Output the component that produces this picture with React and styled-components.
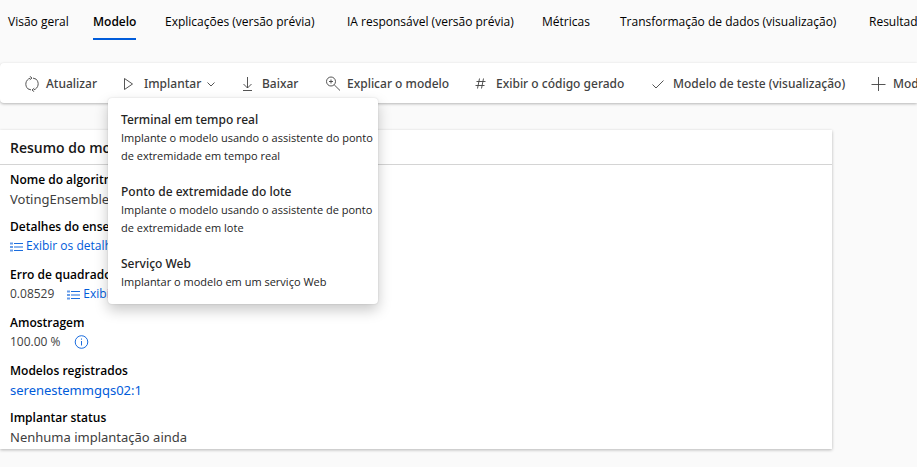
import React from "react";
import styled, { createGlobalStyle } from "styled-components";

const GlobalStyle = createGlobalStyle`
  * { box-sizing: border-box; }
  body {
    margin: 0;
    background: #fafafa;
    color: #000;
    font-family: "Noto Sans", "Open Sans", sans-serif;
    font-size: 12px;
    line-height: 20px;
    overflow: hidden;
  }
  button { font: inherit; color: inherit; border: 0; padding: 0; background: none; cursor: pointer; }
  a { color: #015cda; text-decoration: none; }
`;

const Page = styled.main`
  min-height: 100vh;
  overflow: hidden;
`;

const TabList = styled.div`
  display: flex;
  padding: 4px 0 0 8px;
  margin-bottom: 23px;
`;

const TabSlot = styled.div`
  flex: 0 0 ${(p) => p.$width}px;
`;

const Tab = styled.button`
  height: 36px;
  padding-top: 2px;
  white-space: nowrap;
  font-family: "Open Sans", sans-serif;
  font-weight: ${(p) => (p.$active ? 600 : 400)};
  border-bottom: 2px solid ${(p) => (p.$active ? "#015cda" : "transparent")};
`;

const Toolbar = styled.div`
  display: flex;
  height: 40px;
  padding-left: 24px;
  background: #fff;
  border-radius: 4px 0 0 4px;
  box-shadow: 0 1px 3px rgba(0, 0, 0, 0.28);
`;

const CommandSlot = styled.div`
  position: relative;
  display: flex;
  flex: 0 0 ${(p) => p.$width}px;
`;

const Command = styled.button`
  display: flex;
  align-items: center;
  gap: 6px;
  padding-top: 1px;
  white-space: nowrap;
  font-weight: 500;
  color: #424242;
`;

const Icon = styled.svg`
  flex: none;
  width: 16px;
  height: 16px;
  fill: none;
  stroke: currentColor;
  stroke-width: 0.9;
`;

const Chevron = styled(Icon)`
  width: 8px;
  height: 8px;
`;

const Menu = styled.div`
  position: absolute;
  z-index: 2;
  top: 35px;
  left: -14px;
  width: 270px;
  padding: 13px 4px 13px 13px;
  display: flex;
  flex-direction: column;
  gap: 18px;
  background: #fff;
  border-radius: 4px;
  box-shadow: 0 0 2px rgba(0, 0, 0, 0.14), 0 6px 14px rgba(0, 0, 0, 0.22);
`;

const MenuItem = styled.button`
  text-align: left;
  color: #242424;
  line-height: 18px;
`;

const MenuTitle = styled.span`
  display: block;
  font-weight: 500;
`;

const MenuText = styled.span`
  display: block;
  font-family: "Open Sans", sans-serif;
  font-size: 11px;
`;

const Card = styled.section`
  width: calc(100% - 85px);
  margin-top: 27px;
  padding-bottom: 3px;
  background: #fff;
  box-shadow: 0 1px 3px rgba(0, 0, 0, 0.28);
`;

const CardTitle = styled.h2`
  margin: 0;
  padding: 8px 10px 7px;
  font-family: "Open Sans", sans-serif;
  font-size: 14px;
  line-height: 19px;
  font-weight: 600;
  color: #171717;
  border-bottom: 1px solid #d4d4d4;
`;

const Details = styled.dl`
  margin: 0;
  padding: 6px 10px 0;
  display: flex;
  flex-direction: column;
  gap: 10px;
`;

const Label = styled.dt`
  font-family: "Open Sans", sans-serif;
  font-weight: 600;
  line-height: 18px;
  white-space: nowrap;
`;

const Value = styled.dd`
  display: flex;
  align-items: center;
  gap: 13px;
  margin: 0;
  height: ${(p) => (p.$large ? 19 : 20)}px;
  font-family: ${(p) => (p.$large ? '"Noto Sans"' : '"Open Sans"')}, sans-serif;
  font-size: ${(p) => (p.$large ? 13 : 12)}px;
  line-height: 18px;
  color: #404040;
  white-space: nowrap;
`;

const IconLink = styled.a`
  display: flex;
  align-items: center;
  gap: 3px;
`;

const InfoButton = styled.button`
  display: flex;
  color: #015cda;
`;

const ListGlyph = styled(Icon)`
  width: 13px;
  height: 13px;
`;

const ListIcon = () => (
  <ListGlyph viewBox="0 0 13 13">
    <path d="M4 3.500h9M4 7h9M4 10.500h9" />
    <path d="M0 3.500h3M0 7h3M0 10.500h3" strokeWidth="2" strokeOpacity="0.6" />
  </ListGlyph>
);

const InfoIcon = () => (
  <Icon viewBox="0 0 16 16">
    <circle cx="7.500" cy="8" r="6.3" />
    <path d="M7.500 7v4.500M7.500 4.500v1.200" />
  </Icon>
);

const icons = {
  refresh: (
    <>
      <path d="M6 2.200A6.300 6.300 0 0 0 4 12.900M10 13.800A6.300 6.300 0 0 0 12 3.100" />
      <path d="M5.800.300l2.200 1.700-2.200 1.800M10.200 15.700L8 14l2.200-1.800M9 2.100l3 1M7 13.900l-3-1" />
    </>
  ),
  play: <path d="M2.5 2.5v11L10.500 8z" />,
  download: <path d="M7.500 1v11M3.500 8l4 4 4-4M3 14.500h9" />,
  explain: <path d="M10.500 5.500a4.500 4.500 0 1 1-9 0 4.500 4.500 0 0 1 9 0zM9.200 8.800L15 14.500M6 3.500v4M4 5.500h4" />,
  hash: <path d="M5.500 2.500l-2 10M9.500 2.500l-2 10M2.500 5.500h9M1.500 9.500h9" />,
  check: <path d="M1.500 8.500l3.500 3.500 7.500-7.500" />,
  plus: <path d="M7.500 1v14M.5 8.500h14" />,
};

const tabs = [
  ["Visão geral", 85],
  ["Modelo", 72],
  ["Explicações (versão prévia)", 182],
  ["IA responsável (versão prévia)", 195],
  ["Métricas", 78],
  ["Transformação de dados (visualização)", 249],
  ["Resultados", 80],
];

const commands = [
  ["refresh", "Atualizar", 98],
  ["play", "Implantar", 118],
  ["download", "Baixar", 85],
  ["explain", "Explicar o modelo", 149],
  ["hash", "Exibir o código gerado", 177],
  ["check", "Modelo de teste (visualização)", 220],
  ["plus", "Modelo", 90],
];

const menuItems = [
  ["Terminal em tempo real", "Implante o modelo usando o assistente do ponto de extremidade em tempo real"],
  ["Ponto de extremidade do lote", "Implante o modelo usando o assistente de ponto de extremidade em lote"],
  ["Serviço Web", "Implantar o modelo em um serviço Web"],
];

export default function App() {
  return (
    <Page>
      <GlobalStyle />
      <TabList role="tablist">
        {tabs.map(([name, width]) => (
          <TabSlot key={name} $width={width}>
            <Tab role="tab" aria-selected={name === "Modelo"} $active={name === "Modelo"}>{name}</Tab>
          </TabSlot>
        ))}
      </TabList>
      <Toolbar role="toolbar">
        {commands.map(([icon, name, width]) => (
          <CommandSlot key={icon} $width={width}>
            <Command>
              <Icon viewBox="0 0 16 16">{icons[icon]}</Icon>
              {name}
              {icon === "play" && <Chevron viewBox="0 0 8 8"><path d="M.5 2.500L4 6l3.500-3.500" /></Chevron>}
            </Command>
            {icon === "play" && (
              <Menu>
                {menuItems.map(([title, text]) => (
                  <MenuItem key={title}>
                    <MenuTitle>{title}</MenuTitle>
                    <MenuText>{text}</MenuText>
                  </MenuItem>
                ))}
              </Menu>
            )}
          </CommandSlot>
        ))}
      </Toolbar>
      <Card>
        <CardTitle>Resumo do modelo</CardTitle>
        <Details>
          <div>
            <Label>Nome do algoritmo</Label>
            <Value $large>VotingEnsemble</Value>
          </div>
          <div>
            <Label>Detalhes do ensemble</Label>
            <Value><IconLink href="#ensemble"><ListIcon />Exibir os detalhes</IconLink></Value>
          </div>
          <div>
            <Label>Erro de quadrado</Label>
            <Value>0.08529<IconLink href="#metrics"><ListIcon />Exibir</IconLink></Value>
          </div>
          <div>
            <Label>Amostragem</Label>
            <Value>100.00 %<InfoButton aria-label="Amostragem"><InfoIcon /></InfoButton></Value>
          </div>
          <div>
            <Label>Modelos registrados</Label>
            <Value $large><a href="#model">serenestemmgqs02:1</a></Value>
          </div>
          <div>
            <Label>Implantar status</Label>
            <Value $large>Nenhuma implantação ainda</Value>
          </div>
        </Details>
      </Card>
    </Page>
  );
}
